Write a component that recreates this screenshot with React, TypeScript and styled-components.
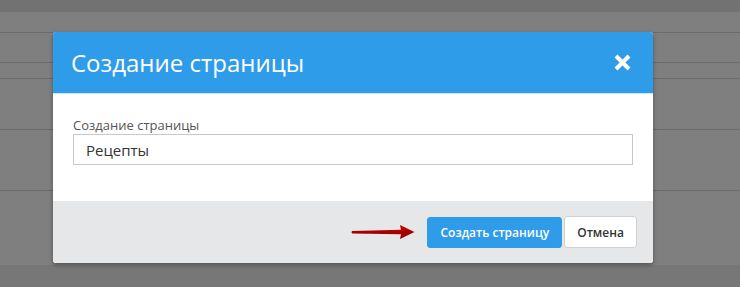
import styled, { createGlobalStyle } from 'styled-components';

const GlobalStyle = createGlobalStyle`
  html, body {
    margin: 0;
    padding: 0;
  }
  body {
    font-family: 'Open Sans', 'Liberation Sans', sans-serif;
    background: #7f7f7f;
  }
`;

const Page = styled.div`
  position: relative;
  width: 740px;
  height: 287px;
  overflow: hidden;
  background: #7f7f7f;
  display: flex;
  flex-direction: column;
`;

const TopBar = styled.div`
  height: 12px;
  background: #727272;
`;

const Row = styled.div<{ $h: number }>`
  height: ${(p) => p.$h}px;
  border-bottom: 1px solid #6b6b6b;
`;

const Filler = styled.div`
  flex: 1;
`;

const BottomBar = styled.div`
  height: 22px;
  background: #777777;
`;

const Modal = styled.div`
  position: absolute;
  left: 53px;
  top: 32px;
  width: 600px;
  border-radius: 3px;
  overflow: hidden;
  background: #fff;
  box-shadow: 0 2px 4px rgba(0, 0, 0, 0.35);
`;

const Header = styled.div`
  height: 62px;
  background: #2e9ce8;
  display: flex;
  align-items: center;
  justify-content: space-between;
  padding: 0 21px 0 18px;
  box-sizing: border-box;
  border-bottom: 1px solid #cfe6f8;
`;

const Title = styled.h2`
  margin: 0;
  font-size: 24px;
  font-weight: 400;
  color: #fff;
`;

const CloseButton = styled.button`
  border: 0;
  background: none;
  padding: 0;
  width: 19px;
  height: 19px;
  display: flex;
  cursor: pointer;
`;

const Body = styled.div`
  padding: 22px 20px 36px;
  display: flex;
  flex-direction: column;
`;

const Label = styled.label`
  font-size: 13px;
  line-height: 18px;
  color: #555;
`;

const Input = styled.input`
  height: 31px;
  box-sizing: border-box;
  border: 1px solid #c8c8c8;
  padding: 0 12px;
  font-family: inherit;
  font-size: 15px;
  color: #333;
  outline: none;
`;

const Footer = styled.div`
  height: 62px;
  background: #e6e7e9;
  display: flex;
  align-items: center;
  justify-content: flex-end;
  padding: 0 16px;
  box-sizing: border-box;
`;

const Arrow = styled.svg`
  margin-right: 12px;
`;

const Button = styled.button<{ $primary?: boolean }>`
  font-family: inherit;
  font-size: 12px;
  font-weight: 600;
  border-radius: 3px;
  box-sizing: border-box;
  cursor: pointer;
  height: ${(p) => (p.$primary ? 31 : 32)}px;
  padding: ${(p) => (p.$primary ? '0 12px' : '0 12px')};
  background: ${(p) => (p.$primary ? '#2e9ce8' : '#fff')};
  color: ${(p) => (p.$primary ? '#fff' : '#333')};
  border: 1px solid ${(p) => (p.$primary ? '#2e9ce8' : '#d0d0d0')};
  & + & {
    margin-left: 2px;
  }
`;

export default function App() {
  return (
    <>
      <GlobalStyle />
      <Page>
        <TopBar />
        <Row $h={20} />
        <Row $h={29} />
        <Row $h={15} />
        <Row $h={50} />
        <Row $h={60} />
        <Filler />
        <BottomBar />
        <Modal>
          <Header>
            <Title>Создание страницы</Title>
            <CloseButton aria-label="Закрыть">
              <svg width="19" height="19" viewBox="0 0 19 19">
                <path d="M3 3L16 16M16 3L3 16" stroke="#fff" strokeWidth="4" strokeLinecap="butt" />
              </svg>
            </CloseButton>
          </Header>
          <Body>
            <Label>Создание страницы</Label>
            <Input defaultValue="Рецепты" />
          </Body>
          <Footer>
            <Arrow width="64" height="16" viewBox="0 0 64 16">
              <defs>
                <linearGradient id="ar" x1="0" y1="0" x2="0" y2="1">
                  <stop offset="0" stopColor="#c80000" />
                  <stop offset="1" stopColor="#8a0000" />
                </linearGradient>
              </defs>
              <path
                d="M1 7L50 5.8L49 1L63.5 8L49 15L50 10.2L1 9.6Q0 8.3 1 7Z"
                fill="url(#ar)"
              />
            </Arrow>
            <Button $primary>Создать страницу</Button>
            <Button>Отмена</Button>
          </Footer>
        </Modal>
      </Page>
    </>
  );
}
